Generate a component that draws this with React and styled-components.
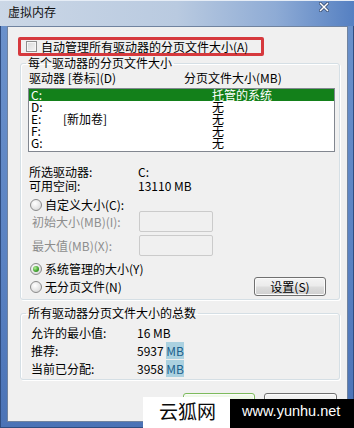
import styled, { createGlobalStyle } from "styled-components"

const GlobalStyle = createGlobalStyle`
    html, body {
        margin: 0;
        padding: 0;
        background: #ffffff;
    }
    body {
        font-family: "Noto Sans CJK SC", "DejaVu Sans", sans-serif;
        font-size: 12px;
        color: #000000;
    }
    * {
        box-sizing: border-box;
    }
`

const Window = styled.div`
    position: relative;
    width: 354px;
    height: 428px;
    display: flex;
    flex-direction: column;
    overflow: hidden;
    background: linear-gradient(180deg, #6d93cc 0%, #5a82c2 60%, #4b73b6 100%);
    box-shadow: inset 0 0 0 1px #2f4d80;
`

const TitleBar = styled.div`
    height: 26px;
    flex-shrink: 0;
    display: flex;
    align-items: center;
    justify-content: space-between;
    padding: 0 25px 0 8px;
    background: linear-gradient(90deg, #cbd7e6 0%, #b9cae0 50%, #8eabd5 78%, #5580c2 100%);
    box-shadow: inset 0 1px 0 #e6edf6;
`

const Title = styled.span`
    font-size: 12px;
    line-height: 14px;
    color: #111111;
    margin-top: -2px;
`

const Close = styled.svg`
    width: 10px;
    height: 10px;
    margin-top: -12px;
`

const Client = styled.div`
    flex: 1;
    margin: 0 6px 6px 7px;
    border: 1px solid #70839f;
    background: #f0f0f0;
    display: flex;
    flex-direction: column;
`

const CheckRow = styled.label`
    align-self: flex-start;
    margin: 10px 0 0 10px;
    width: 246px;
    height: 19px;
    border: 3px solid #d6393d;
    border-radius: 2px;
    display: flex;
    align-items: center;
    gap: 4px;
    padding-left: 5px;
    line-height: 13px;
`

const CheckBox = styled.span`
    width: 11px;
    height: 11px;
    border: 1px solid #8e8f8f;
    background: linear-gradient(135deg, #d9d9d9 0%, #f4f4f4 100%);
    box-shadow: inset 0 0 0 1px #f7f7f7;
`

const Group = styled.fieldset`
    margin: ${p => p.$top}px 7px 0 12px;
    padding: 0 4px ${p => p.$bottom}px 7px;
    border: 1px solid #d5dfe5;
    border-radius: 3px;
    box-shadow: inset 1px 1px 0 #ffffff, 1px 1px 0 #ffffff;
    min-width: 0;
`

const Legend = styled.legend`
    padding: 0 2px;
    margin-left: -2px;
    font-size: 12px;
    line-height: 14px;
`

const HeaderRow = styled.div`
    margin-top: 1px;
    display: grid;
    grid-template-columns: 155px 1fr;
    padding-left: 1px;
    line-height: 14px;
    height: 14px;
`

const ListBox = styled.div`
    margin-top: 3px;
    height: 64px;
    border: 1px solid #828790;
    background: #ffffff;
`

const DriveRow = styled.div`
    display: grid;
    grid-template-columns: 32px 149px 1fr;
    height: 12px;
    line-height: 12px;
    padding-left: 2px;
    background: ${p => (p.$selected ? "#13801a" : "transparent")};
    color: ${p => (p.$selected ? "#ffffff" : "#000000")};
`

const InfoList = styled.div`
    margin-top: ${p => p.$top}px;
    padding-left: ${p => p.$indent}px;
    display: grid;
    grid-template-columns: ${p => p.$col}px 1fr;
    grid-auto-rows: ${p => p.$row}px;
    align-items: center;
    line-height: 14px;
`

const Highlight = styled.span`
    color: #1b5f8c;
    background: rgba(86, 170, 205, 0.45);
`

const RadioRow = styled.div`
    margin-top: ${p => p.$top}px;
    height: ${p => p.$h}px;
    display: flex;
    align-items: center;
    gap: 3px;
    padding-left: 2px;
    line-height: 14px;
`

const Radio = styled.span`
    width: 12px;
    height: 12px;
    border-radius: 50%;
    border: 1px solid #8b8b8b;
    background: radial-gradient(circle at 40% 35%, #ffffff 0%, #e6e6e6 55%, #cfcfcf 100%);
    display: flex;
    align-items: center;
    justify-content: center;
    &::after {
        content: "";
        width: 6px;
        height: 6px;
        border-radius: 50%;
        display: ${p => (p.$checked ? "block" : "none")};
        background: radial-gradient(circle at 35% 35%, #b8ef9c 0%, #43a531 55%, #1f7418 100%);
    }
`

const FieldRow = styled.div`
    margin-top: ${p => p.$top}px;
    height: 21px;
    display: grid;
    grid-template-columns: 107px 74px;
    align-items: center;
    padding-left: 4px;
    color: #8d8d8d;
    line-height: 14px;
`

const FieldBox = styled.div`
    height: 21px;
    border: 1px solid #cbcbcb;
    border-radius: 2px;
    background: #f0f0f0;
`

const BottomRow = styled.div`
    margin-top: 1px;
    height: 19px;
    display: flex;
    align-items: center;
    justify-content: space-between;
    padding-right: 9px;
`

const Button = styled.div`
    width: ${p => p.$w}px;
    height: ${p => p.$h}px;
    border: 1px solid ${p => (p.$focus ? "#7dbb5c" : "#707070")};
    border-radius: 3px;
    background: ${p => (p.$focus
        ? "linear-gradient(180deg, #f3fbee 0%, #e2f4d6 48%, #cfeabb 52%, #c2e3aa 100%)"
        : "linear-gradient(180deg, #f4f4f4 0%, #ebebeb 48%, #dddddd 52%, #cfcfcf 100%)")};
    box-shadow: inset 0 0 0 1px #fbfbfb;
    display: flex;
    align-items: center;
    justify-content: center;
    line-height: 14px;
`

const ButtonBar = styled.div`
    margin-top: 13px;
    display: flex;
    justify-content: flex-end;
    gap: 9px;
    padding-right: 10px;
`

const Watermark = styled.div`
    position: absolute;
    right: 0;
    bottom: 0;
    display: flex;
    align-items: flex-end;
`

const SiteName = styled.div`
    width: 87px;
    height: 31px;
    background: #ffffff;
    padding-left: 16px;
    font-size: 19px;
    line-height: 28px;
    color: #0a0a0a;
`

const SiteUrl = styled.div`
    width: 124px;
    height: 29px;
    background: #000000;
    color: #ffffff;
    padding-left: 12px;
    font-family: "Liberation Sans", Arial, sans-serif;
    font-size: 14.5px;
    line-height: 24px;
`

const drives = [
    { id: "C:", label: "", size: "托管的系统", selected: true },
    { id: "D:", label: "", size: "无" },
    { id: "E:", label: "[新加卷]", size: "无" },
    { id: "F:", label: "", size: "无" },
    { id: "G:", label: "", size: "无" },
]

const App = () => {
    return (
        <Window>
            <GlobalStyle />
            <TitleBar>
                <Title>虚拟内存</Title>
                <Close viewBox="0 0 10 10">
                    <path d="M1.5 1.5 L8.5 8.5 M8.5 1.5 L1.5 8.5" stroke="#33476b" strokeWidth="3" strokeLinecap="square" />
                    <path d="M1.5 1.5 L8.5 8.5 M8.5 1.5 L1.5 8.5" stroke="#ffffff" strokeWidth="1.5" strokeLinecap="square" />
                </Close>
            </TitleBar>
            <Client>
                <CheckRow>
                    <CheckBox />
                    <span>自动管理所有驱动器的分页文件大小(A)</span>
                </CheckRow>

                <Group $top={0} $bottom={3}>
                    <Legend>每个驱动器的分页文件大小</Legend>
                    <HeaderRow>
                        <span>驱动器 [卷标](D)</span>
                        <span>分页文件大小(MB)</span>
                    </HeaderRow>
                    <ListBox>
                        {drives.map(d => (
                            <DriveRow key={d.id} $selected={d.selected}>
                                <span>{d.id}</span>
                                <span>{d.label}</span>
                                <span>{d.size}</span>
                            </DriveRow>
                        ))}
                    </ListBox>
                    <InfoList $top={13} $indent={1} $col={109} $row={14}>
                        <span>所选驱动器:</span>
                        <span>C:</span>
                        <span>可用空间:</span>
                        <span>13110 MB</span>
                    </InfoList>
                    <RadioRow $top={6} $h={12}>
                        <Radio />
                        <span>自定义大小(C):</span>
                    </RadioRow>
                    <FieldRow $top={0}>
                        <span>初始大小(MB)(I):</span>
                        <FieldBox />
                    </FieldRow>
                    <FieldRow $top={3}>
                        <span>最大值(MB)(X):</span>
                        <FieldBox />
                    </FieldRow>
                    <RadioRow $top={6} $h={14}>
                        <Radio $checked />
                        <span>系统管理的大小(Y)</span>
                    </RadioRow>
                    <BottomRow>
                        <RadioRow $top={0} $h={19}>
                            <Radio />
                            <span>无分页文件(N)</span>
                        </RadioRow>
                        <Button $w={72} $h={19}>设置(S)</Button>
                    </BottomRow>
                </Group>

                <Group $top={6} $bottom={1}>
                    <Legend>所有驱动器分页文件大小的总数</Legend>
                    <InfoList $top={4} $indent={3} $col={106} $row={18}>
                        <span>允许的最小值:</span>
                        <span>16 MB</span>
                        <span>推荐:</span>
                        <span>5937 <Highlight>MB</Highlight></span>
                        <span>当前已分配:</span>
                        <span>3958 <Highlight>MB</Highlight></span>
                    </InfoList>
                </Group>

                <ButtonBar>
                    <Button $w={72} $h={23} $focus>确定</Button>
                    <Button $w={73} $h={23}>取消</Button>
                </ButtonBar>
            </Client>
            <Watermark>
                <SiteName>云狐网</SiteName>
                <SiteUrl>www.yunhu.net</SiteUrl>
            </Watermark>
        </Window>
    )
}

export default App
